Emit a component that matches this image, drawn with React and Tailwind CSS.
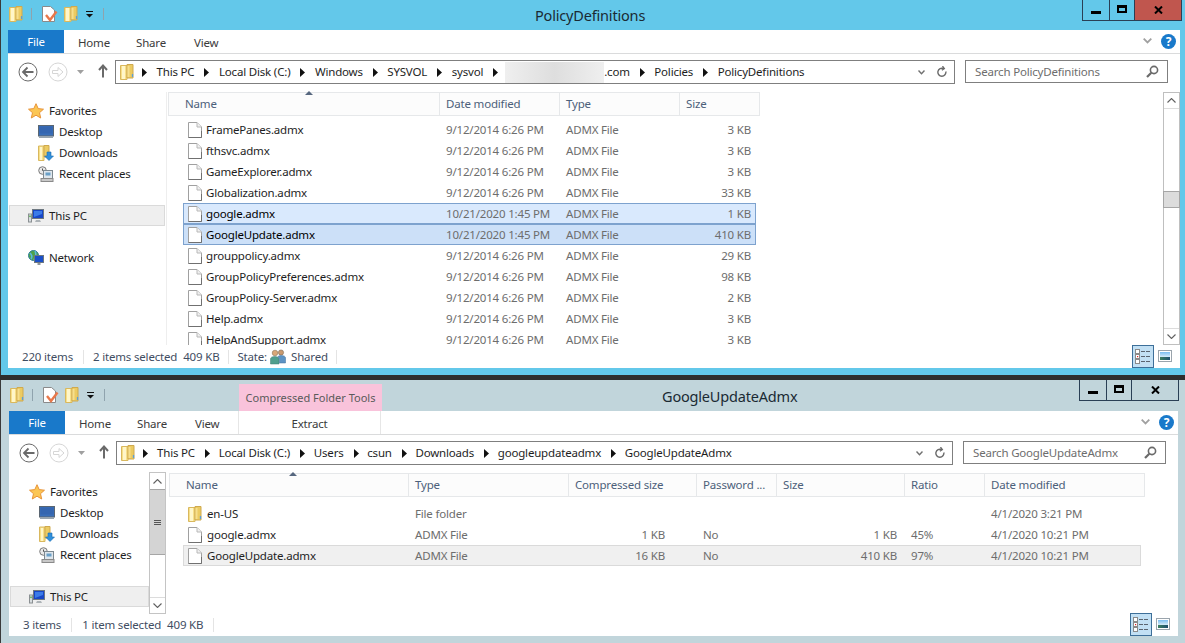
const FONT = 'font-["Noto_Sans",sans-serif]';

function Folder({ className = "" }) {
  return (
    <svg className={className} viewBox="0 0 14 16" width="14" height="16">
      <path d="M.5 1.5 H7 V15.5 H.5 Z" fill="#f7e08a" stroke="#d9b85e" />
      <path d="M7 .5 H13 V14 H7 Z" fill="#eccb62" stroke="#cfa94e" />
      <path d="M3.5 2 V15" stroke="#fff6c9" strokeWidth="3" />
      <path d="M8.5 2 V13" stroke="#f6df8e" strokeWidth="2" />
      <path d="M12.5 10 v3" stroke="#5c9ed6" strokeWidth="1.3" />
    </svg>
  );
}
function Doc({ className = "" }) {
  return (
    <svg className={className} viewBox="0 0 14 16" width="14" height="16">
      <path d="M.5 .5 H9 L13.5 5 V15.5 H.5 Z" fill="#fff" stroke="#a0a0a0" />
      <path d="M9 .5 V5 H13.5" fill="#f0f0f0" stroke="#b8b8b8" />
      <path d="M.5 15.5 H13.5 V9" fill="none" stroke="#707070" />
    </svg>
  );
}
function Properties({ className = "" }) {
  return (
    <svg className={className} viewBox="0 0 16 16" width="16" height="16">
      <path d="M.5 .5 H8.5 L12.5 4 V15.5 H.5 Z" fill="#fff" stroke="#8a8a8a" />
      <path d="M4 9 L8 14 L14.5 5.5" fill="none" stroke="#e8784a" strokeWidth="2.4" />
    </svg>
  );
}
function Star({ className = "" }) {
  return (
    <svg className={className} viewBox="0 0 16 16" width="16" height="16">
      <path d="M8 .7 L10.2 5.6 L15.5 6.2 L11.5 9.7 L12.7 15 L8 12.2 L3.3 15 L4.5 9.7 L.5 6.2 L5.8 5.6 Z" fill="#fbc654" stroke="#e8943a" />
    </svg>
  );
}
function Desktop({ className = "" }) {
  return (
    <svg className={className} viewBox="0 0 16 14" width="16" height="14">
      <rect x=".5" y=".5" width="15" height="10.5" fill="#3a6fb8" stroke="#5a6672" />
      <rect x="1.5" y="1.5" width="13" height="7" fill="#3566b0" />
      <rect x="1" y="11" width="14" height="2" fill="#98a4ae" />
    </svg>
  );
}
function Downloads({ className = "" }) {
  return (
    <svg className={className} viewBox="0 0 16 16" width="16" height="16">
      <path d="M.5 1 H6 V15.5 H.5 Z" fill="#f7e08a" stroke="#d9b85e" />
      <path d="M6 .5 H11 V12 H6 Z" fill="#eccb62" stroke="#cfa94e" />
      <path d="M3 2 V15" stroke="#fff6c9" strokeWidth="2" />
      <path d="M9 7 H13 V11 H15.5 L11 15.5 L6.5 11 H9 Z" fill="#2f8fdc" stroke="#1c6db0" strokeWidth=".6" />
    </svg>
  );
}
function Recent({ className = "" }) {
  return (
    <svg className={className} viewBox="0 0 16 16" width="16" height="16">
      <circle cx="4.5" cy="4.5" r="3.8" fill="#e8e8e8" stroke="#7a7a7a" />
      <path d="M4.5 2.5 V4.5 H6.5" fill="none" stroke="#555" />
      <rect x="5.5" y="4.5" width="9" height="8" fill="#dfe6ec" stroke="#7c8890" />
      <rect x="7.5" y="6.5" width="5" height="3" fill="#6aa0c8" />
      <rect x="3" y="12.5" width="12" height="3" fill="#c8c8c8" stroke="#8a8a8a" />
    </svg>
  );
}
function PC({ className = "" }) {
  return (
    <svg className={className} viewBox="0 0 16 16" width="16" height="16">
      <rect x=".5" y="6" width="3" height="8" fill="#d8dde0" stroke="#8a8f92" />
      <rect x="1.2" y="7.5" width="1.6" height="1.6" fill="#56b24e" />
      <rect x="4.5" y="1.5" width="11" height="9" fill="#1746c6" stroke="#6d7780" />
      <path d="M6 3 H14 V6 L6 9 Z" fill="#3b7be8" />
      <path d="M8 12 H12 L13 14 H7 Z" fill="#aeb4b8" />
    </svg>
  );
}
function Net({ className = "" }) {
  return (
    <svg className={className} viewBox="0 0 16 16" width="16" height="16">
      <circle cx="5.5" cy="5.5" r="5" fill="#4ea34a" stroke="#2f7d9a" />
      <path d="M2 3 Q5 6 3 9 M7 1 Q9 5 6 10" stroke="#5bb7e0" strokeWidth="1.6" fill="none" />
      <rect x="6.5" y="5.5" width="9" height="7" fill="#1a4fc8" stroke="#6d7780" />
      <path d="M9.5 13 H12.5 V15 H9.5 Z" fill="#8e969b" />
    </svg>
  );
}
function Users({ className = "" }) {
  return (
    <svg className={className} viewBox="0 0 16 16" width="16" height="16">
      <circle cx="5" cy="4" r="2.8" fill="#d9a878" stroke="#7a6a50" strokeWidth=".5" />
      <path d="M.5 15 V10 Q.5 7.5 5 7.5 Q9 7.5 9 10 V15 Z" fill="#4f9f8e" stroke="#3f7e76" strokeWidth=".5" />
      <circle cx="11" cy="3.5" r="2.6" fill="#c99a70" stroke="#6a5a45" strokeWidth=".5" />
      <path d="M8 7.5 Q9 6.5 11 6.5 Q15.5 6.5 15.5 9 V14 H9.5 V10 Z" fill="#5c93c4" stroke="#3d6f9a" strokeWidth=".5" />
    </svg>
  );
}
function Tri({ className = "" }) {
  return (
    <svg className={className} viewBox="0 0 5 9" width="5" height="9">
      <path d="M0 0 L5 4.5 L0 9 Z" fill="#111" />
    </svg>
  );
}
function Chevron({ up, className = "" }) {
  return (
    <svg className={className} viewBox="0 0 9 5" width="9" height="5">
      <path d={up ? "M.5 4.5 L4.5 .5 L8.5 4.5" : "M.5 .5 L4.5 4.5 L8.5 .5"} fill="none" stroke="#606060" strokeWidth="1.1" />
    </svg>
  );
}
function Circle({ dim, flip, className = "" }) {
  const c = dim ? "#d6d6d6" : "#6a6a6a";
  return (
    <svg className={className} viewBox="0 0 20 20" width="20" height="20">
      <circle cx="10" cy="10" r="9" fill="#fff" stroke={c} strokeWidth="1" />
      <path d={flip ? "M4.5 8.5 H10 V5.5 L15 10 L10 14.5 V11.5 H4.5 Z" : "M15.5 10 H5.5 M9.5 5.5 L5 10 L9.5 14.5"} fill={flip ? "#fff" : "none"} stroke={c} strokeWidth={flip ? 1 : 1.8} />
    </svg>
  );
}
function ViewIcons({ className = "" }) {
  return (
    <div className={className}>
      <div className="absolute left-0 top-0 w-[22px] h-[23px] bg-[#c2e0f4] border border-[#3d6f99] flex items-center justify-center">
        <svg viewBox="0 0 16 15" width="16" height="15">
          <rect x=".5" y=".5" width="4" height="4" fill="#fff" stroke="#8a8a8a" />
          <rect x=".5" y="5.5" width="4" height="4" fill="#fff" stroke="#8a8a8a" />
          <rect x="2" y="7" width="1.2" height="1.2" fill="#e02020" />
          <rect x=".5" y="10.5" width="4" height="4" fill="#fff" stroke="#8a8a8a" />
          <path d="M6 2.5 H10 M11 2.5 H15 M6 7.5 H10 M11 7.5 H15 M6 12.5 H10 M11 12.5 H15" stroke="#5a6470" strokeWidth="1" />
        </svg>
      </div>
      <div className="absolute left-[26px] top-[5px] w-[14px] h-[12px] bg-white border border-[#9aa4ac] p-px overflow-hidden">
        <div className="h-[5px] bg-gradient-to-b from-[#79bdf0] to-[#d6ecf8]"></div>
        <div className="h-[3px] bg-gradient-to-r from-[#3f7f5f] to-[#1f4f6f]"></div>
      </div>
    </div>
  );
}
function QuickAccess({ className = "" }) {
  return (
    <div className={className}>
      <Folder className="absolute left-0 top-0" />
      <div className="absolute left-[22px] top-[2px] w-px h-[12px] bg-[#8fa3ad]"></div>
      <Properties className="absolute left-[33px] top-0" />
      <Folder className="absolute left-[55px] top-0" />
      <svg className="absolute left-[77px] top-[5px]" viewBox="0 0 7 7" width="7" height="7">
        <path d="M0 .5 H7" stroke="#111" />
        <path d="M0 3 H7 L3.5 6.5 Z" fill="#111" />
      </svg>
      <div className="absolute left-[94px] top-[2px] w-px h-[12px] bg-[#8fa3ad]"></div>
    </div>
  );
}
function WinButtons({ closeBg, className = "" }) {
  return (
    <div className={`flex h-[21px] border-x border-b border-[#2a3f55] ${className}`}>
      <div className="w-[27px] border-r border-[#2a3f55] flex items-center justify-center">
        <div className="w-[10px] h-[3px] bg-black mt-[4px]"></div>
      </div>
      <div className="w-[25px] border-r border-[#2a3f55] flex items-center justify-center">
        <div className="w-[10px] h-[8px] border-2 border-black border-t-[3px] -mt-[2px]"></div>
      </div>
      <div className={`w-[46px] flex items-center justify-center ${closeBg}`}>
        <svg viewBox="0 0 9 8" width="9" height="8" className="-mt-[1px]">
          <path d="M1 .5 L8 7.5 M8 .5 L1 7.5" stroke="#000" strokeWidth="2" />
        </svg>
      </div>
    </div>
  );
}
function Crumb({ children, className = "", tri = "ml-[10px] mr-[9.5px]" }) {
  return (
    <div className={`flex items-center ${className}`}>
      <Tri className={tri} />
      <span>{children}</span>
    </div>
  );
}
function NavItem({ icon, label, className = "" }) {
  return (
    <div className={`absolute left-[20px] h-[21px] flex items-center gap-[5px] text-[#1e1e1e] ${className}`}>
      {icon}
      <span>{label}</span>
    </div>
  );
}
function NavPane() {
  return (
    <>
      <NavItem className="top-[70px]" icon={<Star />} label="Favorites" />
      <NavItem className="top-[91px] left-[30px]" icon={<Desktop />} label="Desktop" />
      <NavItem className="top-[112px] left-[30px]" icon={<Downloads />} label="Downloads" />
      <NavItem className="top-[133px] left-[30px]" icon={<Recent />} label="Recent places" />
    </>
  );
}

function Chrome({ path, search, fileExtra }) {
  return (
    <>
      <div className="absolute left-0 top-0 w-[56px] h-[23px] bg-[#1979ca] text-white flex items-center justify-center">File</div>
      <div className="absolute left-[56px] top-0 h-[23px] text-[#3b3b3b] leading-[26px]">
        <span className="absolute left-[14px]">Home</span>
        <span className="absolute left-[72px]">Share</span>
        <span className="absolute left-[130px]">View</span>
      </div>
      {fileExtra}
      <div className="absolute left-0 right-0 top-[23px] h-px bg-[#dadbdc]"></div>
      <svg className="absolute right-[28px] top-[8px]" viewBox="0 0 9 6" width="9" height="6">
        <path d="M.7 .7 L4.5 4.5 L8.3 .7" fill="none" stroke="#a0a0a0" strokeWidth="1.8" />
      </svg>
      <div className="absolute right-[4px] top-[4px] w-[15px] h-[15px] rounded-full bg-[#1979ca] text-white font-bold text-[12px] leading-[15px] text-center">?</div>

      <Circle className="absolute left-[10px] top-[32px]" />
      <Circle dim flip className="absolute left-[40px] top-[32px]" />
      <svg className="absolute left-[69px] top-[40px]" viewBox="0 0 7 4" width="7" height="4"><path d="M0 0 H7 L3.5 4 Z" fill="#a0a0a0" /></svg>
      <svg className="absolute left-[90px] top-[34px]" viewBox="0 0 10 14" width="10" height="14"><path d="M5 13.5 V2 M1 6 L5 1.5 L9 6" fill="none" stroke="#6a6a6a" strokeWidth="2" /></svg>

      <div className="absolute left-[107px] right-[225px] top-[30px] h-[24px] border border-[#7f7f7f] flex items-center">
        <Folder className="ml-[4px] mr-[3px]" />
        <div className="flex items-center text-[#1e1e1e]">{path}</div>
        <svg className="absolute right-[29px] top-[9px]" viewBox="0 0 7 5" width="7" height="5"><path d="M.5 .5 L3.5 3.8 L6.5 .5" fill="none" stroke="#707070" strokeWidth="1.4" /></svg>
        <svg className="absolute right-[7px] top-[5px]" viewBox="0 0 10 12" width="10" height="12"><path d="M8.8 5.5 A4 4 0 1 1 6.5 2.6 M5.5 .2 L7.3 2.6 L4.8 4.2" fill="none" stroke="#6a6a6a" strokeWidth="1.4" /></svg>
      </div>

      <div className="absolute right-[12px] top-[30px] w-[203px] h-[23px] border border-[#7f7f7f] flex items-center pl-[9px] text-[#6d6d6d]">
        {search}
        <svg className="absolute right-[8px] top-[4px]" viewBox="0 0 13 13" width="13" height="13"><circle cx="8" cy="5" r="3.6" fill="none" stroke="#6a6a6a" strokeWidth="1.6" /><path d="M5.3 7.7 L1 12" stroke="#6a6a6a" strokeWidth="2.2" /></svg>
      </div>
    </>
  );
}

const topRows = [
  ["FramePanes.admx", "9/12/2014 6:26 PM", "3 KB"],
  ["fthsvc.admx", "9/12/2014 6:26 PM", "3 KB"],
  ["GameExplorer.admx", "9/12/2014 6:26 PM", "3 KB"],
  ["Globalization.admx", "9/12/2014 6:26 PM", "33 KB"],
  ["google.admx", "10/21/2020 1:45 PM", "1 KB", 1],
  ["GoogleUpdate.admx", "10/21/2020 1:45 PM", "410 KB", 2],
  ["grouppolicy.admx", "9/12/2014 6:26 PM", "29 KB"],
  ["GroupPolicyPreferences.admx", "9/12/2014 6:26 PM", "98 KB"],
  ["GroupPolicy-Server.admx", "9/12/2014 6:26 PM", "2 KB"],
  ["Help.admx", "9/12/2014 6:26 PM", "3 KB"],
  ["HelpAndSupport.admx", "9/12/2014 6:26 PM", "3 KB"],
];

function TopWindow() {
  return (
    <div className="absolute left-0 top-0 w-[1185px] h-[375px] bg-[#63c8ea] border-l border-[#3a3a3a]">
      <QuickAccess className="absolute left-[8px] top-[6px]" />
      <div className="absolute left-[534px] top-[5px] text-[14.5px] leading-[20px] text-[#1a2a33]">PolicyDefinitions</div>
      <WinButtons closeBg="bg-[#c0564e]" className="absolute right-[3px] top-0" />

      <div className="absolute left-[7px] top-[30px] w-[1172px] h-[338px] bg-white overflow-hidden">
        <Chrome
          search="Search PolicyDefinitions"
          path={
            <>
              <Crumb className="-ml-[5px]">This PC</Crumb>
              <Crumb>Local Disk (C:)</Crumb>
              <Crumb>Windows</Crumb>
              <Crumb>SYSVOL</Crumb>
              <Crumb>sysvol</Crumb>
              <div className="flex items-center">
                <Tri className="ml-[10px] mr-[7px]" />
                <div className="w-[99px] h-[21px] bg-gradient-to-r from-[#efefef] via-[#dedede] to-[#efefef]"></div>
                <span>.com</span>
              </div>
              <Crumb>Policies</Crumb>
              <Crumb>PolicyDefinitions</Crumb>
            </>
          }
        />
        <div className="absolute left-[1px] top-[175px] w-[156px] h-[21px] border border-[#dadada] bg-[#efefef]"></div>
        <NavPane />
        <NavItem className="top-[175px]" icon={<PC />} label="This PC" />
        <NavItem className="top-[217px]" icon={<Net />} label="Network" />
        <div className="absolute left-[158px] top-[62px] w-px h-[253px] bg-[#eeeeee]"></div>

        <div className="absolute left-[160px] top-[62px] w-[592px] h-[24px] bg-[#fcfcfc] border border-[#e6e8ea] grid grid-cols-[271px_120px_120px_80px] text-[#4c607a] leading-[22px]">
          <div className="pl-[16px] border-r border-[#e6e8ea]">Name</div>
          <div className="pl-[6px] border-r border-[#e6e8ea]">Date modified</div>
          <div className="pl-[6px] border-r border-[#e6e8ea]">Type</div>
          <div className="pl-[6px]">Size</div>
        </div>
        <svg className="absolute left-[297px] top-[61px]" viewBox="0 0 8 4" width="8" height="4"><path d="M0 4 L4 0 L8 4 Z" fill="#56677f" /></svg>

        <div className="absolute left-[175px] top-[89px] w-[573px] h-[226px] overflow-hidden">
          {topRows.map(([name, date, size, sel]) => (
            <div
              key={name}
              className={`h-[21px] grid grid-cols-[262px_120px_100px_85px] items-center border ${sel === 1 ? "bg-[#d9e9fd] border-[#7da2ce]" : sel === 2 ? "bg-[#cce0f8] border-[#7da2ce]" : "border-transparent"}`}
            >
              <div className={`flex items-center gap-[4px] pl-[4px] ${sel ? "text-black" : "text-[#1e1e1e]"}`}>
                <Doc />
                <span className="whitespace-nowrap">{name}</span>
              </div>
              <div className="text-[#6d6d6d] whitespace-nowrap">{date}</div>
              <div className="text-[#6d6d6d] whitespace-nowrap">ADMX File</div>
              <div className="text-[#6d6d6d] text-right whitespace-nowrap">{size}</div>
            </div>
          ))}
        </div>

        <div className="absolute right-0 top-[62px] w-[17px] h-[253px] border border-[#bfbfbf] flex flex-col">
          <div className="h-[16px] border-b border-[#dcdcdc] flex items-center justify-center"><Chevron up /></div>
          <div className="flex-1 relative bg-white">
            <div className="absolute -left-px -right-px top-[82px] h-[17px] bg-[#dcdcdc] border border-[#a6a6a6]"></div>
          </div>
          <div className="h-[16px] border-t border-[#dcdcdc] flex items-center justify-center"><Chevron /></div>
        </div>

        <div className="absolute left-[14px] top-[316px] h-[21px] flex items-center text-[#3f4d62]">
          <span>220 items</span>
          <div className="w-px h-[14px] bg-[#e4e4e4] ml-[10px] mr-[9px]"></div>
          <span>2 items selected</span>
          <span className="ml-[6px]">409 KB</span>
          <div className="w-px h-[14px] bg-[#e4e4e4] ml-[9px] mr-[8px]"></div>
          <span>State:</span>
          <Users className="ml-[3px] mr-[5px]" />
          <span>Shared</span>
          <div className="w-px h-[14px] bg-[#e4e4e4] ml-[8px]"></div>
        </div>
        <ViewIcons className="absolute left-[1124px] top-[315px] w-[40px] h-[23px]" />
      </div>
    </div>
  );
}

const botRows = [
  ["en-US", "File folder", "", "", "", "", "4/1/2020 3:21 PM", "folder"],
  ["google.admx", "ADMX File", "1 KB", "No", "1 KB", "45%", "4/1/2020 10:21 PM"],
  ["GoogleUpdate.admx", "ADMX File", "16 KB", "No", "410 KB", "97%", "4/1/2020 10:21 PM", "sel"],
];

function BottomWindow() {
  const tight = "ml-[10px] mr-[8.7px]";
  return (
    <div className="absolute left-0 top-[380px] w-[1185px] h-[263px] bg-[#c1d5db] border-l border-[#3a3a3a]">
      <QuickAccess className="absolute left-[9px] top-[7px]" />
      <div className="absolute left-[238px] top-[4px] w-[143px] h-[27px] bg-[#f9c3db] flex items-center justify-center text-[#5a5a5a] text-[11px] tracking-normal whitespace-nowrap">Compressed Folder Tools</div>
      <div className="absolute left-[661px] top-[6px] text-[14.5px] leading-[20px] text-[#1a2a33]">GoogleUpdateAdmx</div>
      <WinButtons closeBg="" className="absolute right-[6px] top-0" />

      <div className="absolute left-[8px] top-[31px] w-[1169px] h-[225px] bg-white overflow-hidden">
        <Chrome
          search="Search GoogleUpdateAdmx"
          fileExtra={
            <div className="absolute left-[229px] top-0 w-[143px] h-[23px] border-x border-[#e6e6e6] leading-[26px] text-center text-[#3b3b3b]">Extract</div>
          }
          path={
            <>
              <Crumb tri={tight} className="-ml-[4.7px]">This PC</Crumb>
              <Crumb tri={tight}>Local Disk (C:)</Crumb>
              <Crumb tri={tight}>Users</Crumb>
              <Crumb tri={tight}>csun</Crumb>
              <Crumb tri={tight}>Downloads</Crumb>
              <Crumb tri={tight}>googleupdateadmx</Crumb>
              <Crumb tri={tight}>GoogleUpdateAdmx</Crumb>
            </>
          }
        />
        <div className="absolute left-[1px] top-[175px] w-[139px] h-[21px] border border-[#dadada] bg-[#efefef]"></div>
        <NavPane />
        <NavItem className="top-[175px]" icon={<PC />} label="This PC" />

        <div className="absolute left-[140px] top-[61px] w-[17px] h-[142px] border border-[#c4c4c4] flex flex-col bg-white">
          <div className="h-[16px] flex items-center justify-center"><Chevron up /></div>
          <div className="h-[66px] bg-[#d4d4d4] border-y border-[#a6a6a6] flex flex-col items-center justify-center gap-[1px]">
            <div className="w-[7px] h-px bg-[#555]"></div>
            <div className="w-[7px] h-px bg-[#555]"></div>
            <div className="w-[7px] h-px bg-[#555]"></div>
          </div>
          <div className="flex-1"></div>
          <div className="h-[16px] border-t border-[#dcdcdc] flex items-center justify-center"><Chevron /></div>
        </div>

        <div className="absolute left-[160px] top-[62px] w-[976px] h-[24px] bg-[#fcfcfc] border border-[#e6e8ea] grid grid-cols-[239px_160px_128px_80px_128px_80px_159px] text-[#4c607a] leading-[22px]">
          <div className="pl-[16px] border-r border-[#e6e8ea]">Name</div>
          <div className="pl-[6px] border-r border-[#e6e8ea]">Type</div>
          <div className="pl-[6px] border-r border-[#e6e8ea]">Compressed size</div>
          <div className="pl-[6px] border-r border-[#e6e8ea]">Password ...</div>
          <div className="pl-[6px] border-r border-[#e6e8ea]">Size</div>
          <div className="pl-[6px] border-r border-[#e6e8ea]">Ratio</div>
          <div className="pl-[6px]">Date modified</div>
        </div>
        <svg className="absolute left-[280px] top-[61px]" viewBox="0 0 8 4" width="8" height="4"><path d="M0 4 L4 0 L8 4 Z" fill="#56677f" /></svg>

        <div className="absolute left-[174px] top-[92px] w-[958px]">
          {botRows.map(([name, type, comp, pw, size, ratio, date, kind]) => (
            <div
              key={name}
              className={`h-[21px] grid grid-cols-[231px_157px_93px_80px_152px_94px_149px] items-center border ${kind === "sel" ? "bg-[#f0f0f0] border-[#dadada]" : "border-transparent"}`}
            >
              <div className="flex items-center gap-[5px] pl-[4px] text-[#1e1e1e]">
                {kind === "folder" ? <Folder /> : <Doc />}
                <span className="whitespace-nowrap">{name}</span>
              </div>
              <div className="text-[#6d6d6d] whitespace-nowrap">{type}</div>
              <div className="text-[#6d6d6d] text-right whitespace-nowrap">{comp}</div>
              <div className="text-[#6d6d6d] pl-[38px] whitespace-nowrap">{pw}</div>
              <div className="text-[#6d6d6d] text-right whitespace-nowrap">{size}</div>
              <div className="text-[#6d6d6d] pl-[14px] whitespace-nowrap">{ratio}</div>
              <div className="text-[#6d6d6d] whitespace-nowrap">{date}</div>
            </div>
          ))}
        </div>

        <div className="absolute left-[14px] top-[203px] h-[21px] flex items-center text-[#3f4d62]">
          <span>3 items</span>
          <div className="w-px h-[14px] bg-[#e4e4e4] ml-[10px] mr-[10px]"></div>
          <span>1 item selected</span>
          <span className="ml-[6px]">409 KB</span>
          <div className="w-px h-[14px] bg-[#e4e4e4] ml-[10px] mr-[10px]"></div>
        </div>
        <ViewIcons className="absolute left-[1121px] top-[202px] w-[40px] h-[23px]" />
      </div>
    </div>
  );
}

export default function App() {
  return (
    <div className={`relative w-[1185px] h-[643px] overflow-hidden bg-[#2e2e2e] text-[11.5px] tracking-[-0.18px] leading-[16px] ${FONT}`}>
      <TopWindow />
      <BottomWindow />
    </div>
  );
}
